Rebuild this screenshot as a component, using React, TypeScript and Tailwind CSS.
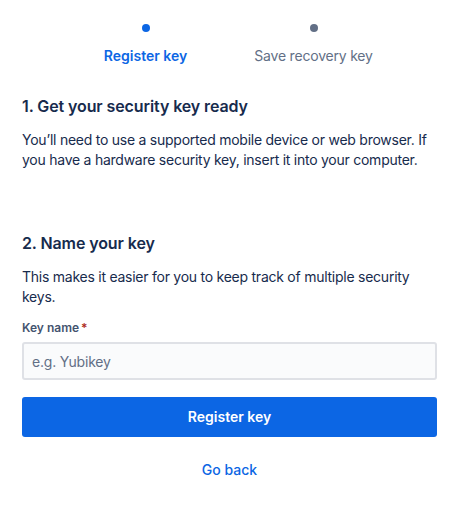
import React from "react";

const steps = [
  { label: "Register key", active: true },
  { label: "Save recovery key", active: false },
];

const App = () => {
  return (
    <main className="bg-white min-h-screen w-[459px] px-[22px] font-['Inter',sans-serif] text-[#172B4D]">
      {/* Progress steps */}
      <div className="flex justify-center pt-6">
        {steps.map((step) => (
          <div key={step.label} className="w-[168px] flex flex-col items-center">
            <span
              className={`w-2 h-2 rounded-full ${step.active ? "bg-[#0C66E4]" : "bg-[#626F86]"}`}
            />
            <span
              className={`mt-[14px] text-sm leading-5 ${
                step.active ? "text-[#0C66E4] font-semibold" : "text-[#626F86] tracking-[-0.2px]"
              }`}
            >
              {step.label}
            </span>
          </div>
        ))}
      </div>

      {/* Step 1 */}
      <section className="mt-[30px]">
        <h2 className="text-base leading-5 font-semibold tracking-[-0.1px]">1. Get your security key ready</h2>
        <p className="mt-[14px] text-sm leading-5 tracking-[-0.25px]">
          You’ll need to use a supported mobile device or web browser. If you have a hardware
          security key, insert it into your computer.
        </p>
      </section>

      {/* Step 2 */}
      <section className="mt-[63px]">
        <h2 className="text-base leading-5 font-semibold tracking-[-0.1px]">2. Name your key</h2>
        <p className="mt-[14px] text-sm leading-5 tracking-[-0.25px]">
          This makes it easier for you to keep track of multiple security keys.
        </p>

        <label className="block mt-[13px] text-xs leading-4 font-semibold text-[#44546F]">
          Key name<span className="text-[#AE2E24] ml-0.5">*</span>
        </label>
        <input
          placeholder="e.g. Yubikey"
          className="mt-[6px] w-full h-[38px] px-2 text-sm tracking-[-0.2px] rounded-[3px] border-2 border-[#DFE1E6] bg-[#FAFBFC] placeholder:text-[#626F86] outline-none"
        />

        <button className="mt-[17px] w-full h-10 rounded-[3px] bg-[#0C66E4] text-white text-sm font-semibold">
          Register key
        </button>

        <div className="mt-5 text-center">
          <a className="text-sm leading-5 font-medium text-[#0C66E4]">Go back</a>
        </div>
      </section>
    </main>
  );
};

export default App;
